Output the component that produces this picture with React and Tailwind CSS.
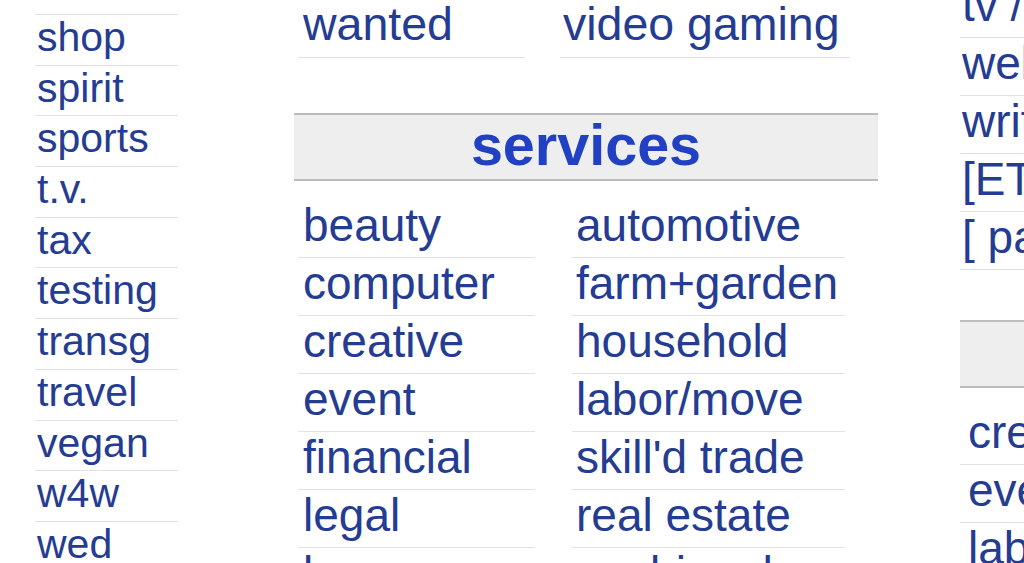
export default function App() {
  const left = ["shop", "spirit", "sports", "t.v.", "tax", "testing", "transg", "travel", "vegan", "w4w", "wed"];
  const services = [
    ["beauty", "automotive"],
    ["computer", "farm+garden"],
    ["creative", "household"],
    ["event", "labor/move"],
    ["financial", "skill'd trade"],
    ["legal", "real estate"],
    ["lessons", "sm biz ads"],
  ];
  const jobs = ["tv / film / video", "web / info design", "writing / editing", "[ETC]", "[ part-time ]"];
  const gigs = ["creative", "event", "labor"];
  const font = { fontFamily: '"Liberation Sans", Arial, Helvetica, sans-serif' };
  return (
    <div className="w-[1024px] h-[563px] overflow-hidden bg-white flex text-[#243c92]" style={font}>
      {/* left column */}
      <div className="ml-[35px] w-[143px] shrink-0 flex flex-col">
        <div className="h-[15px] shrink-0 border-b border-[#e2e2e2]" />
        {left.map((t) => (
          <div key={t} className="h-[50.7px] shrink-0 border-b border-[#e2e2e2] pl-[2px] pt-[3px] text-[41px] leading-[39.6px] whitespace-nowrap">
            {t}
          </div>
        ))}
      </div>

      {/* middle column */}
      <div className="ml-[116px] w-[584px] shrink-0 flex flex-col">
        <div className="h-[58px] shrink-0 flex text-[46.5px] leading-[48px] whitespace-nowrap">
          <div className="ml-[4px] w-[227px] border-b border-[#e2e2e2] pl-[5px]">wanted</div>
          <div className="ml-[35px] w-[290px] border-b border-[#e2e2e2] pl-[3px]">video gaming</div>
        </div>
        <div className="mt-[55px] h-[68px] shrink-0 bg-[#eeeeee] border-t-2 border-b-2 border-[#bcbcbc] flex items-center justify-center">
          <span className="text-[57.5px] font-bold leading-[60px] -mt-[4px] text-[#2140c2]">services</span>
        </div>
        <div className="mt-[19px] flex flex-col">
          {services.map(([a, b]) => (
            <div key={a} className="h-[58px] shrink-0 flex text-[46px] leading-[50px] whitespace-nowrap">
              <div className="ml-[4px] w-[237px] border-b border-[#e2e2e2] pl-[5px]">{a}</div>
              <div className="ml-[37px] w-[273px] border-b border-[#e2e2e2] pl-[4px]">{b}</div>
            </div>
          ))}
        </div>
      </div>

      {/* right column */}
      <div className="ml-[82px] w-[300px] shrink-0 flex flex-col">
        <div className="-mt-[20px] flex flex-col">
          {jobs.map((t) => (
            <div key={t} className="h-[58px] shrink-0 border-b border-[#e2e2e2] pl-[2px] text-[46px] leading-[50px] whitespace-nowrap">
              {t}
            </div>
          ))}
        </div>
        <div className="mt-[50px] h-[68px] shrink-0 bg-[#eeeeee] border-t-2 border-b-2 border-[#bcbcbc]" />
        <div className="mt-[19px] flex flex-col">
          {gigs.map((t) => (
            <div key={t} className="h-[58px] shrink-0 border-b border-[#e2e2e2] pl-[8px] text-[46px] leading-[50px] whitespace-nowrap">
              {t}
            </div>
          ))}
        </div>
      </div>
    </div>
  );
}
